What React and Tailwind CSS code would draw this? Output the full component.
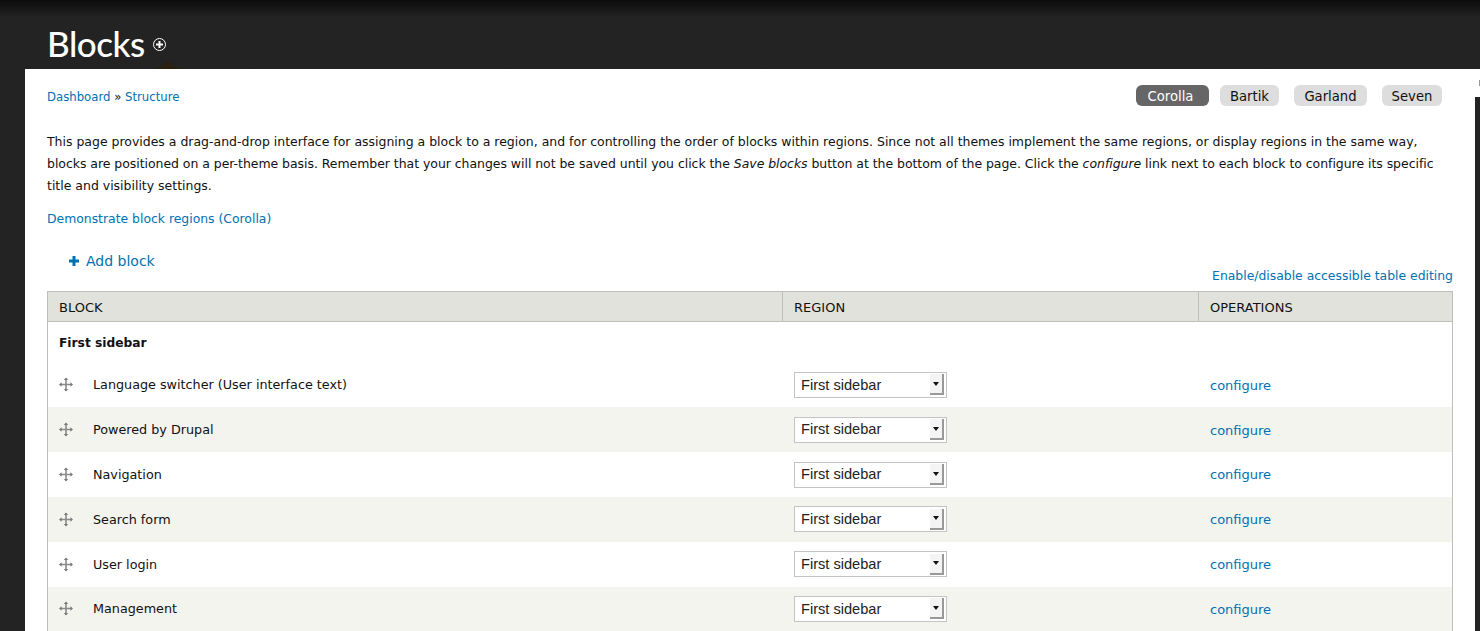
const Move = () => (
  <svg width="15" height="15" viewBox="0 0 15 15" className="shrink-0">
    <path d="M7 1.500v12M1 7.500h12" stroke="#8a8a8a" strokeWidth="1.6" />
    <path d="M7 0.500l2.200 2.600h-4.400zM7 14.500l2.200-2.600h-4.400zM0 7.500l2.600-2.200v4.400zM14 7.500l-2.600-2.200v4.400z" fill="#7a7a7a" />
  </svg>
);

const Select = () => (
  <div className="w-[153px] h-[26px] border border-[#c4c4c4] bg-white flex items-center justify-between pl-[6px] pr-[2px] font-['Liberation_Sans',sans-serif] text-[14.6px] text-[#222]">
    <span className="mt-[1px]">First sidebar</span>
    <span className="w-[14px] h-[21px] bg-[#f4f4f4] border-r-2 border-b-2 border-[#999] flex items-center justify-center">
      <span className="w-0 h-0 border-x-[3.5px] border-x-transparent border-t-[4px] border-t-[#111]" />
    </span>
  </div>
);

const rows = ["Language switcher (User interface text)", "Powered by Drupal", "Navigation", "Search form", "User login", "Management"];

export default function App() {
  return (
    <div className="w-[1480px] h-[631px] overflow-hidden bg-[#232323] font-['DejaVu_Sans',sans-serif] text-[12.48px] text-[#111]">
      <header className="relative h-[69px] bg-gradient-to-b from-[#0c0c0c] from-0% to-[#232323] to-[25%] pl-[47px] pt-[21px] flex items-start gap-[8px]">
        <h1 className="font-['Lato',sans-serif] font-medium text-[35px] tracking-[-0.5px] leading-[44px] text-white">Blocks</h1>
        <span className="mt-[17px] w-[13px] h-[13px] rounded-full border border-white flex items-center justify-center">
          <svg width="9" height="9" viewBox="0 0 9 9"><path d="M4.500 1v7M1 4.500h7" stroke="#fff" strokeWidth="2" /></svg>
        </span>
        <svg width="22" height="8" viewBox="0 0 22 8" className="absolute left-[157px] bottom-0"><path d="M0 8L9 1q2-1.500 4 0l9 7z" fill="#2a2010" /></svg>
      </header>
      <div className="flex pl-[25px]">
        <main className="w-[1450px] bg-white h-[562px] pl-[22px] pr-[22px] pt-[16px]">
          <div className="flex justify-between items-start h-[22px]">
            <div className="text-[#0071b3] text-[11.7px] leading-[22px] mt-[1px]">Dashboard <span className="text-[#111]">»</span> Structure</div>
            <div className="flex text-[13.2px] mr-[11px]">
              <span className="h-[21px] w-[73px] pt-[2px] pr-[4px] rounded-[6px] bg-[#666] text-white flex items-center justify-center mr-[11px]">Corolla</span>
              <span className="h-[21px] w-[59px] pt-[2px] rounded-[6px] bg-[#dddddd] flex items-center justify-center mr-[15px]">Bartik</span>
              <span className="h-[21px] w-[73px] pt-[2px] rounded-[6px] bg-[#dddddd] flex items-center justify-center mr-[15px]">Garland</span>
              <span className="h-[21px] w-[60px] pt-[2px] rounded-[6px] bg-[#dddddd] flex items-center justify-center">Seven</span>
            </div>
          </div>
          <p className="mt-[24px] leading-[22px] w-[1400px]">
            This page provides a drag-and-drop interface for assigning a block to a region, and for controlling the order of blocks within regions. Since not all themes implement the same regions, or display regions in the same way, <span className="tracking-[-0.035px]">blocks are positioned on a per-theme basis. Remember that your changes will not be saved until you click the <em>Save blocks</em> button at the bottom of the page. Click the <em>configure</em> link next to each block to configure its specific</span> title and visibility settings.
          </p>
          <div className="mt-[11px] leading-[22px] text-[12.4px] text-[#0071b3]">Demonstrate block regions (Corolla)</div>
          <div className="mt-[20px] pl-[22px] flex items-center gap-[7px] text-[#0071b3] text-[14px] leading-[22px]">
            <svg width="10" height="10" viewBox="0 0 10 10"><path d="M5 0v10M0 5h10" stroke="#0071b3" strokeWidth="3" /></svg>
            Add block
          </div>
          <div className="text-right text-[#0071b3] text-[12.4px] leading-[18px] mt-[-5px]">Enable/disable accessible table editing</div>
          <div className="mt-[6px] border-x border-[#bebfb9]">
            <div className="flex h-[31px] bg-[#e1e2dc] border-y border-[#bebfb9] items-center text-[13px]">
              <div className="w-[735px] pl-[11px] pt-[2px] h-full flex items-center border-r border-[#bebfb9]">BLOCK</div>
              <div className="w-[416px] pl-[11px] pt-[2px] h-full flex items-center border-r border-[#bebfb9]">REGION</div>
              <div className="pl-[11px] pt-[2px]">OPERATIONS</div>
            </div>
            <div className="h-[40.6px] pl-[11px] pt-[11px] font-bold text-[12.25px] leading-[20px]">First sidebar</div>
            {rows.map((r, i) => (
              <div key={r} className={`flex items-center h-[44.8px] ${i % 2 ? "bg-[#f3f4ee]" : "bg-white"}`}>
                <div className="w-[735px] pl-[11px] flex items-center gap-[19px] text-[12.75px]"><Move />{r}</div>
                <div className="w-[416px] pl-[11px]"><Select /></div>
                <div className="pl-[11px] mt-[1px] text-[#0071b3] text-[13px]">configure</div>
              </div>
            ))}
          </div>
        </main>
        <aside className="w-[5px]">
          <div className="h-[28px] bg-white flex justify-end pt-[11px]">
            <div className="w-[1px] h-[6px] bg-[#999]" />
          </div>
        </aside>
      </div>
    </div>
  );
}
